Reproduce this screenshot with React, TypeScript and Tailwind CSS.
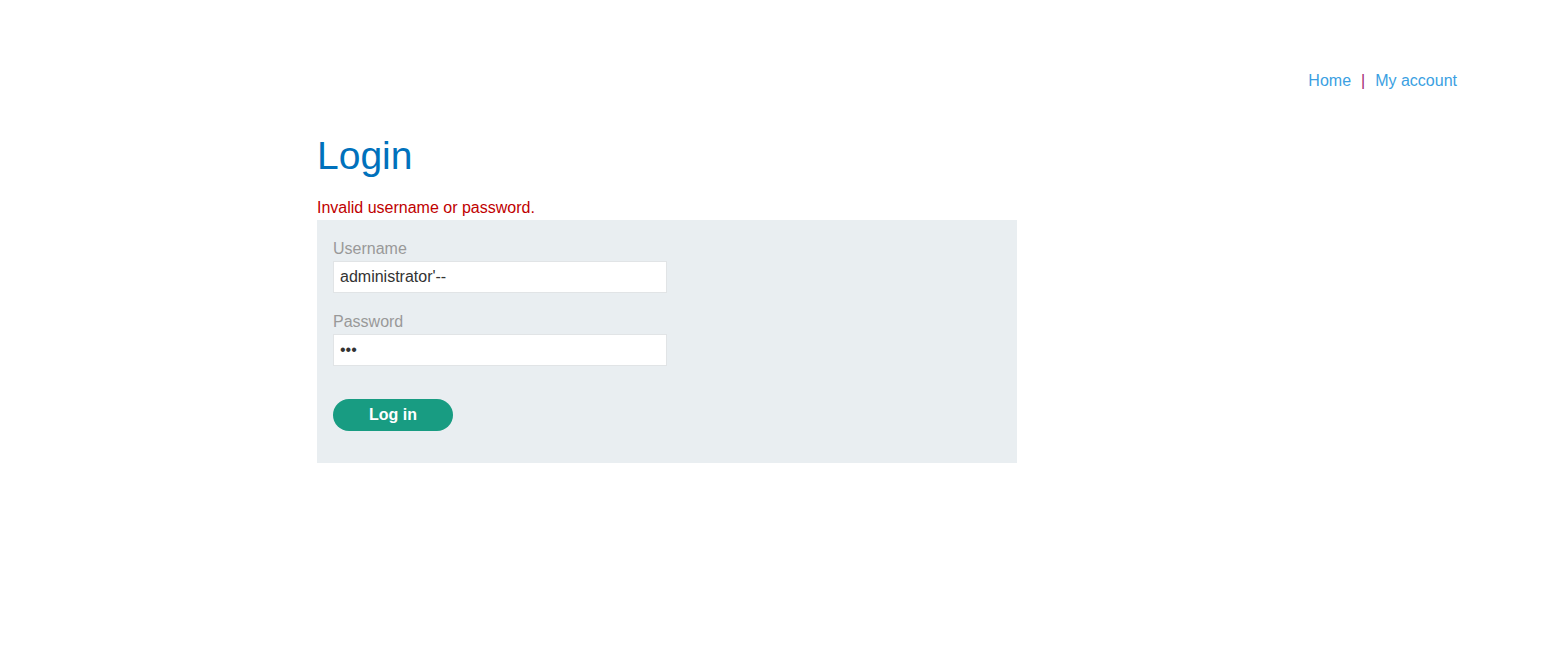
import React from "react";

export default function App() {
  const font = { fontFamily: '"Liberation Sans", Arial, sans-serif' };
  return (
    <div className="min-h-[658px] w-full bg-white" style={font}>
      <header className="flex justify-end pr-[111px] pt-[71px]">
        <nav className="flex items-center text-[16px] leading-[20px]">
          <a className="text-[#3b9fe2]">Home</a>
          <span className="mx-[10px] text-[#a3236f]">|</span>
          <a className="text-[#3b9fe2]">My account</a>
        </nav>
      </header>
      <main className="pl-[317px] pt-[43px]">
        <h1 className="text-[39px] leading-[44px] font-normal text-[#0071bc]">Login</h1>
        <div className="mt-[19px] text-[16px] leading-[22px] text-[#c00000]">
          Invalid username or password.
        </div>
        <form
          className="mt-[1px] flex w-[700px] flex-col bg-[#e9eef1] px-[16px] pt-[16px] pb-[32px]"
          onSubmit={(e) => e.preventDefault()}
        >
          <label className="text-[16px] leading-[25px] text-[#999999]">Username</label>
          <input
            type="text"
            readOnly
            defaultValue="administrator'--"
            className="h-[32px] w-[334px] border border-[#e1e4e6] bg-white px-[6px] text-[16px] text-[#333333] outline-none"
            style={font}
          />
          <label className="mt-[16px] text-[16px] leading-[25px] text-[#999999]">Password</label>
          <input
            type="password"
            readOnly
            defaultValue="abc"
            className="h-[32px] w-[334px] border border-[#e1e4e6] bg-white px-[6px] text-[16px] text-[#333333] outline-none"
            style={font}
          />
          <button
            type="submit"
            className="mt-[33px] h-[32px] w-[120px] rounded-full bg-[#189c82] text-[16px] font-bold text-white"
            style={font}
          >
            Log in
          </button>
        </form>
      </main>
    </div>
  );
}
